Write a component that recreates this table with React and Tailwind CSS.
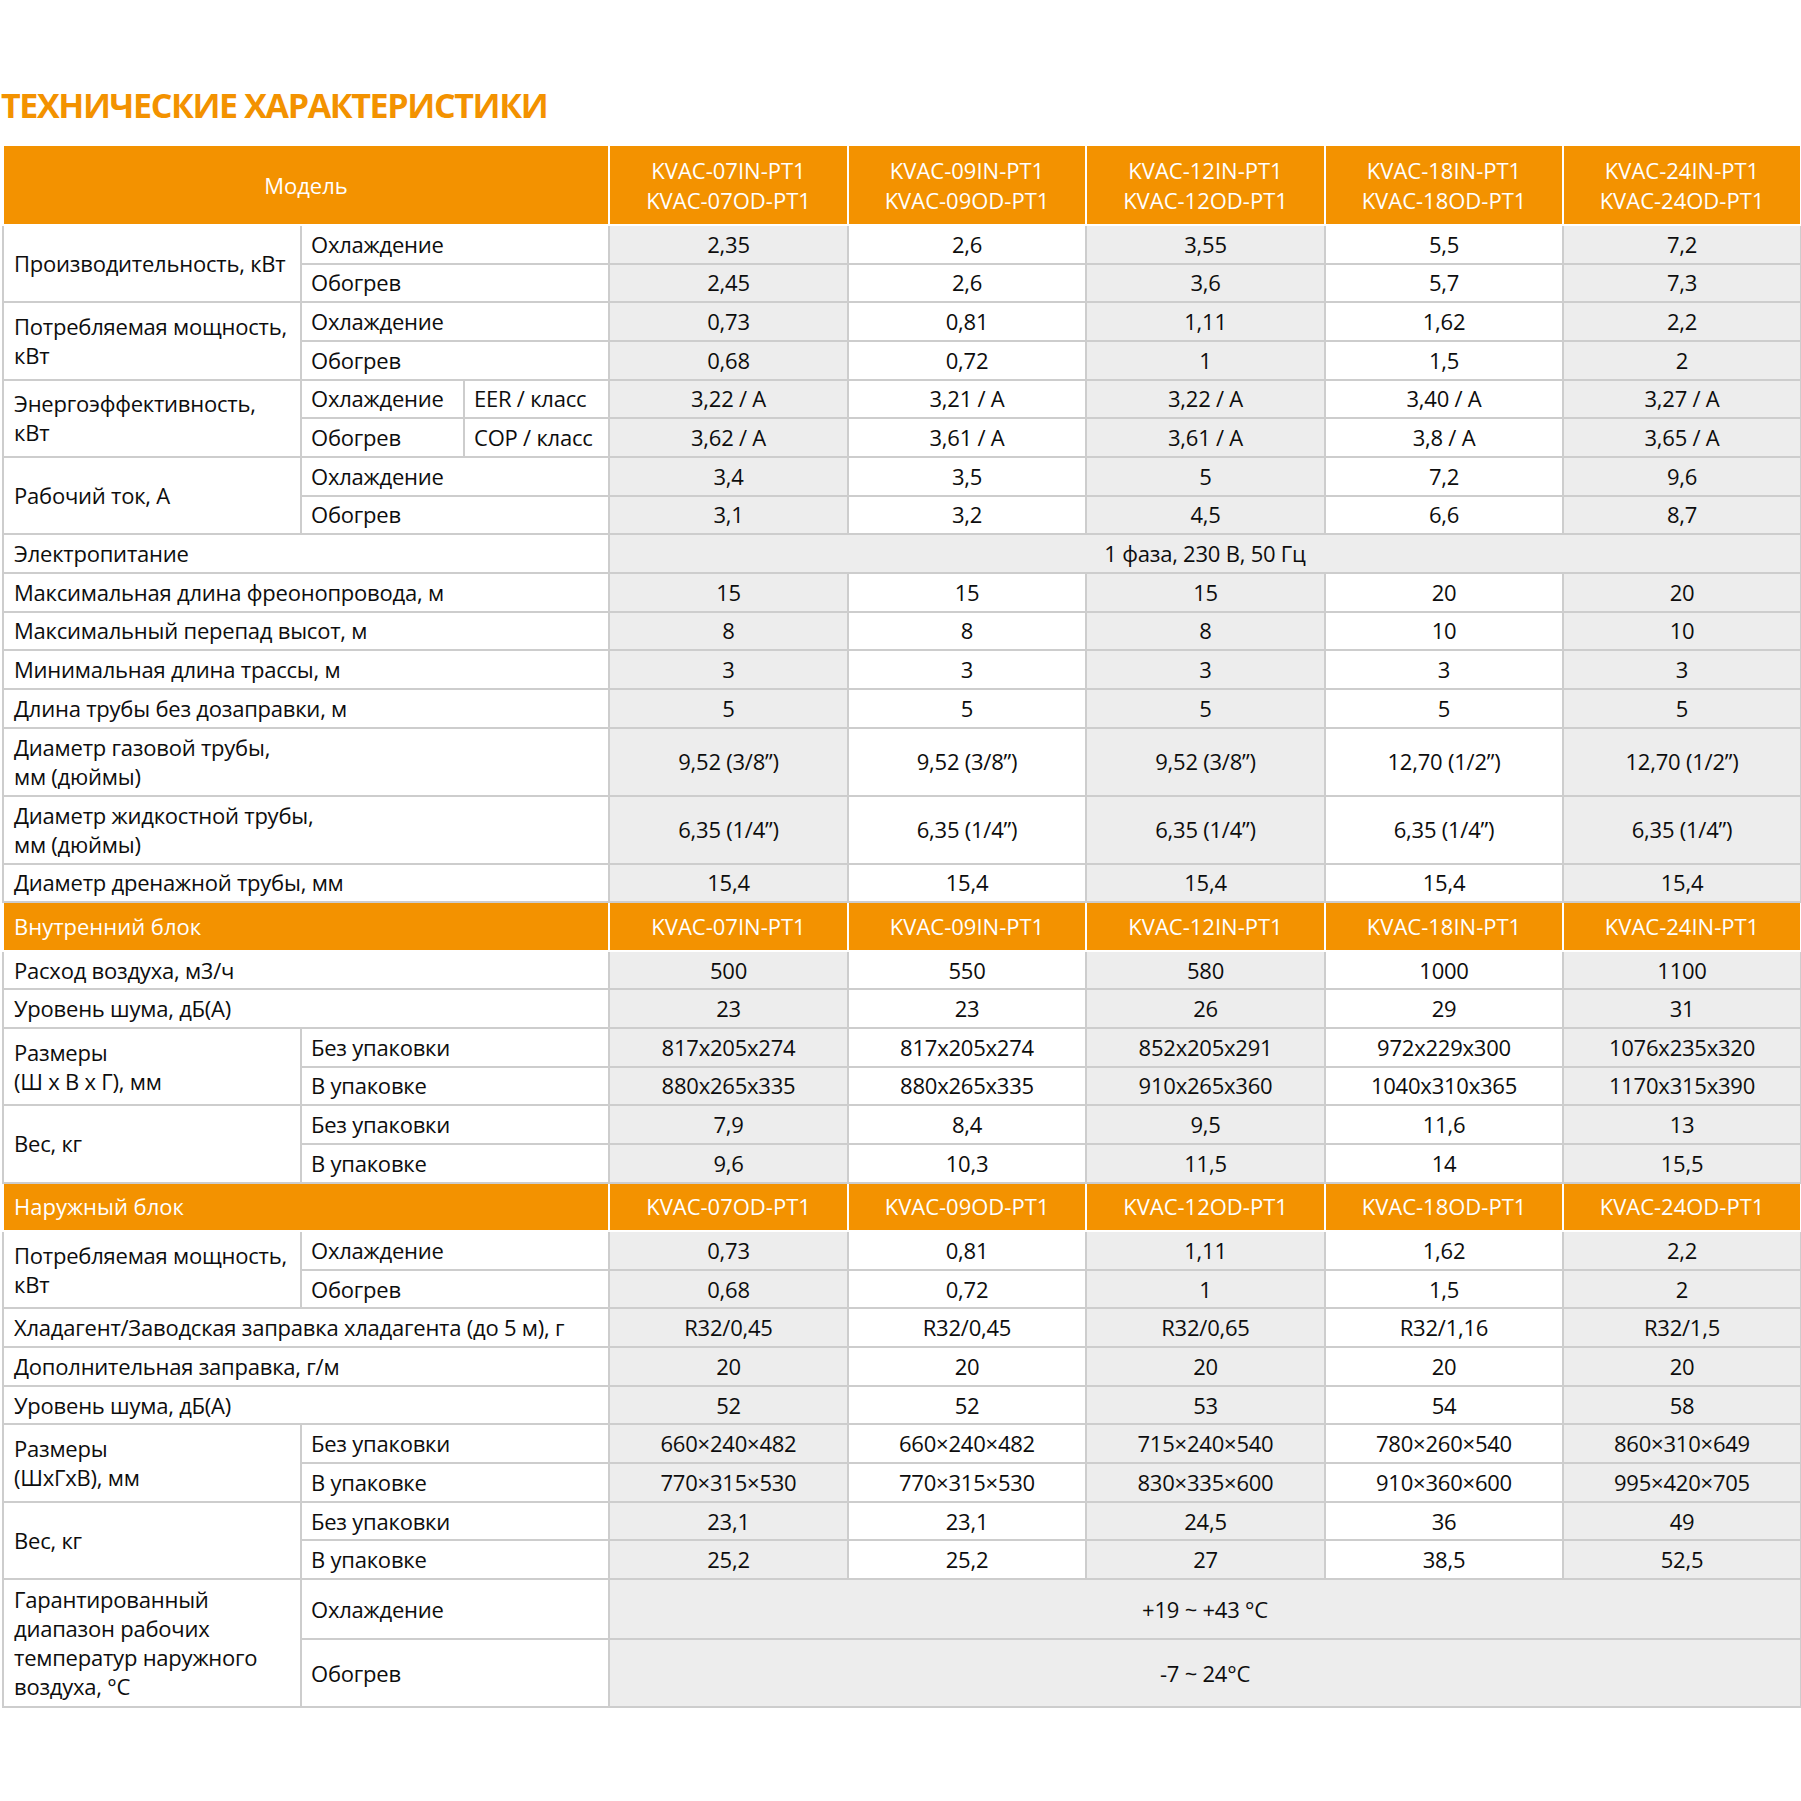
const font = { fontFamily: '"Open Sans", "Noto Sans", sans-serif' };

const CELL = 'border-2 border-[#cdcdcd] align-middle';
const OR = 'border-2 border-white bg-[#f39200] text-white align-middle tracking-normal';
const LBL = `${CELL} bg-white pl-[10px] pr-2 leading-[29px]`;
const SUB = `${CELL} bg-white pl-[9px] whitespace-nowrap`;

const ROW = 'h-[38.67px]';

function Vals({ v }) {
  return v.map((x, i) => (
    <td
      key={i}
      className={`${CELL} text-center whitespace-nowrap ${i % 2 === 0 ? 'bg-[#ededed]' : 'bg-white'}`}
    >
      {x}
    </td>
  ));
}

function Span({ children }) {
  return (
    <td colSpan={5} className={`${CELL} text-center bg-[#ededed]`}>
      {children}
    </td>
  );
}

function Pair({ label, a, b, va, vb }) {
  return (
    <>
      <tr className={ROW}>
        <td rowSpan={2} className={LBL}>{label}</td>
        <td colSpan={2} className={SUB}>{a}</td>
        <Vals v={va} />
      </tr>
      <tr className={ROW}>
        <td colSpan={2} className={SUB}>{b}</td>
        <Vals v={vb} />
      </tr>
    </>
  );
}

function Single({ label, v, tall }) {
  return (
    <tr className={tall ? 'h-[68px]' : ROW}>
      <td colSpan={3} className={`${LBL} whitespace-nowrap`}>{label}</td>
      <Vals v={v} />
    </tr>
  );
}

function Section({ title, models }) {
  return (
    <tr className="h-[48.5px]">
      <td colSpan={3} className={`${OR} pl-[10px]`}>{title}</td>
      {models.map((m) => (
        <td key={m} className={`${OR} text-center whitespace-nowrap`}>{m}</td>
      ))}
    </tr>
  );
}

const ids = ['07', '09', '12', '18', '24'];

export default function App() {
  return (
    <div className="w-[1801px] h-[1801px] bg-white text-[#0d0d0d]" style={font}>
      <div className="pt-[85px] pb-[19px]">
        <h1 className="pl-[1px] text-[34px] leading-[40px] font-bold tracking-[-0.04em] text-[#f39200]">
          ТЕХНИЧЕСКИЕ ХАРАКТЕРИСТИКИ
        </h1>
      </div>
      <table className="ml-[2px] w-[1797px] table-fixed border-collapse text-[22px] leading-[29px] tracking-[-0.01em]">
        <colgroup>
          <col className="w-[298px]" />
          <col className="w-[163px]" />
          <col className="w-[145px]" />
          <col className="w-[239px]" />
          <col className="w-[238px]" />
          <col className="w-[239px]" />
          <col className="w-[238px]" />
          <col className="w-[238px]" />
        </colgroup>
        <tbody>
          <tr className="h-[80px]">
            <td colSpan={3} className={`${OR} text-center`}>Модель</td>
            {ids.map((m) => (
              <td key={m} className={`${OR} text-center leading-[30px]`}>
                KVAC-{m}IN-PT1
                <br />
                KVAC-{m}OD-PT1
              </td>
            ))}
          </tr>

          <Pair
            label="Производительность, кВт"
            a="Охлаждение"
            b="Обогрев"
            va={['2,35', '2,6', '3,55', '5,5', '7,2']}
            vb={['2,45', '2,6', '3,6', '5,7', '7,3']}
          />
          <Pair
            label={<>Потребляемая мощность,<br />кВт</>}
            a="Охлаждение"
            b="Обогрев"
            va={['0,73', '0,81', '1,11', '1,62', '2,2']}
            vb={['0,68', '0,72', '1', '1,5', '2']}
          />

          <tr className={ROW}>
            <td rowSpan={2} className={LBL}>Энергоэффективность,<br />кВт</td>
            <td className={SUB}>Охлаждение</td>
            <td className={SUB}>EER / класс</td>
            <Vals v={['3,22 / A', '3,21 / A', '3,22 / A', '3,40 / A', '3,27 / A']} />
          </tr>
          <tr className={ROW}>
            <td className={SUB}>Обогрев</td>
            <td className={SUB}>COP / класс</td>
            <Vals v={['3,62 / A', '3,61 / A', '3,61 / A', '3,8 / A', '3,65 / A']} />
          </tr>

          <Pair
            label="Рабочий ток, А"
            a="Охлаждение"
            b="Обогрев"
            va={['3,4', '3,5', '5', '7,2', '9,6']}
            vb={['3,1', '3,2', '4,5', '6,6', '8,7']}
          />

          <tr className={ROW}>
            <td colSpan={3} className={LBL}>Электропитание</td>
            <Span>1 фаза, 230 В, 50 Гц</Span>
          </tr>
          <Single label="Максимальная длина фреонопровода, м" v={['15', '15', '15', '20', '20']} />
          <Single label="Максимальный перепад высот, м" v={['8', '8', '8', '10', '10']} />
          <Single label="Минимальная длина трассы, м" v={['3', '3', '3', '3', '3']} />
          <Single label="Длина трубы без дозаправки, м" v={['5', '5', '5', '5', '5']} />
          <Single
            tall
            label={<>Диаметр газовой трубы,<br />мм (дюймы)</>}
            v={['9,52 (3/8”)', '9,52 (3/8”)', '9,52 (3/8”)', '12,70 (1/2”)', '12,70 (1/2”)']}
          />
          <Single
            tall
            label={<>Диаметр жидкостной трубы,<br />мм (дюймы)</>}
            v={['6,35 (1/4”)', '6,35 (1/4”)', '6,35 (1/4”)', '6,35 (1/4”)', '6,35 (1/4”)']}
          />
          <Single label="Диаметр дренажной трубы, мм" v={['15,4', '15,4', '15,4', '15,4', '15,4']} />

          <Section title="Внутренний блок" models={ids.map((m) => `KVAC-${m}IN-PT1`)} />

          <Single label="Расход воздуха, м3/ч" v={['500', '550', '580', '1000', '1100']} />
          <Single label="Уровень шума, дБ(А)" v={['23', '23', '26', '29', '31']} />
          <Pair
            label={<>Размеры<br />(Ш x В x Г), мм</>}
            a="Без упаковки"
            b="В упаковке"
            va={['817x205x274', '817x205x274', '852x205x291', '972x229x300', '1076x235x320']}
            vb={['880x265x335', '880x265x335', '910x265x360', '1040x310x365', '1170x315x390']}
          />
          <Pair
            label="Вес, кг"
            a="Без упаковки"
            b="В упаковке"
            va={['7,9', '8,4', '9,5', '11,6', '13']}
            vb={['9,6', '10,3', '11,5', '14', '15,5']}
          />

          <Section title="Наружный блок" models={ids.map((m) => `KVAC-${m}OD-PT1`)} />

          <Pair
            label={<>Потребляемая мощность,<br />кВт</>}
            a="Охлаждение"
            b="Обогрев"
            va={['0,73', '0,81', '1,11', '1,62', '2,2']}
            vb={['0,68', '0,72', '1', '1,5', '2']}
          />
          <Single
            label="Хладагент/Заводская заправка хладагента (до 5 м), г"
            v={['R32/0,45', 'R32/0,45', 'R32/0,65', 'R32/1,16', 'R32/1,5']}
          />
          <Single label="Дополнительная заправка, г/м" v={['20', '20', '20', '20', '20']} />
          <Single label="Уровень шума, дБ(А)" v={['52', '52', '53', '54', '58']} />
          <Pair
            label={<>Размеры<br />(ШхГхВ), мм</>}
            a="Без упаковки"
            b="В упаковке"
            va={['660×240×482', '660×240×482', '715×240×540', '780×260×540', '860×310×649']}
            vb={['770×315×530', '770×315×530', '830×335×600', '910×360×600', '995×420×705']}
          />
          <Pair
            label="Вес, кг"
            a="Без упаковки"
            b="В упаковке"
            va={['23,1', '23,1', '24,5', '36', '49']}
            vb={['25,2', '25,2', '27', '38,5', '52,5']}
          />

          <tr className="h-[60px]">
            <td rowSpan={2} className={LBL}>
              Гарантированный
              <br />
              диапазон рабочих
              <br />
              температур наружного
              <br />
              воздуха, °С
            </td>
            <td colSpan={2} className={SUB}>Охлаждение</td>
            <Span>+19 ~ +43 °С</Span>
          </tr>
          <tr className="h-[68px]">
            <td colSpan={2} className={SUB}>Обогрев</td>
            <Span>-7 ~ 24°С</Span>
          </tr>
        </tbody>
      </table>
    </div>
  );
}
